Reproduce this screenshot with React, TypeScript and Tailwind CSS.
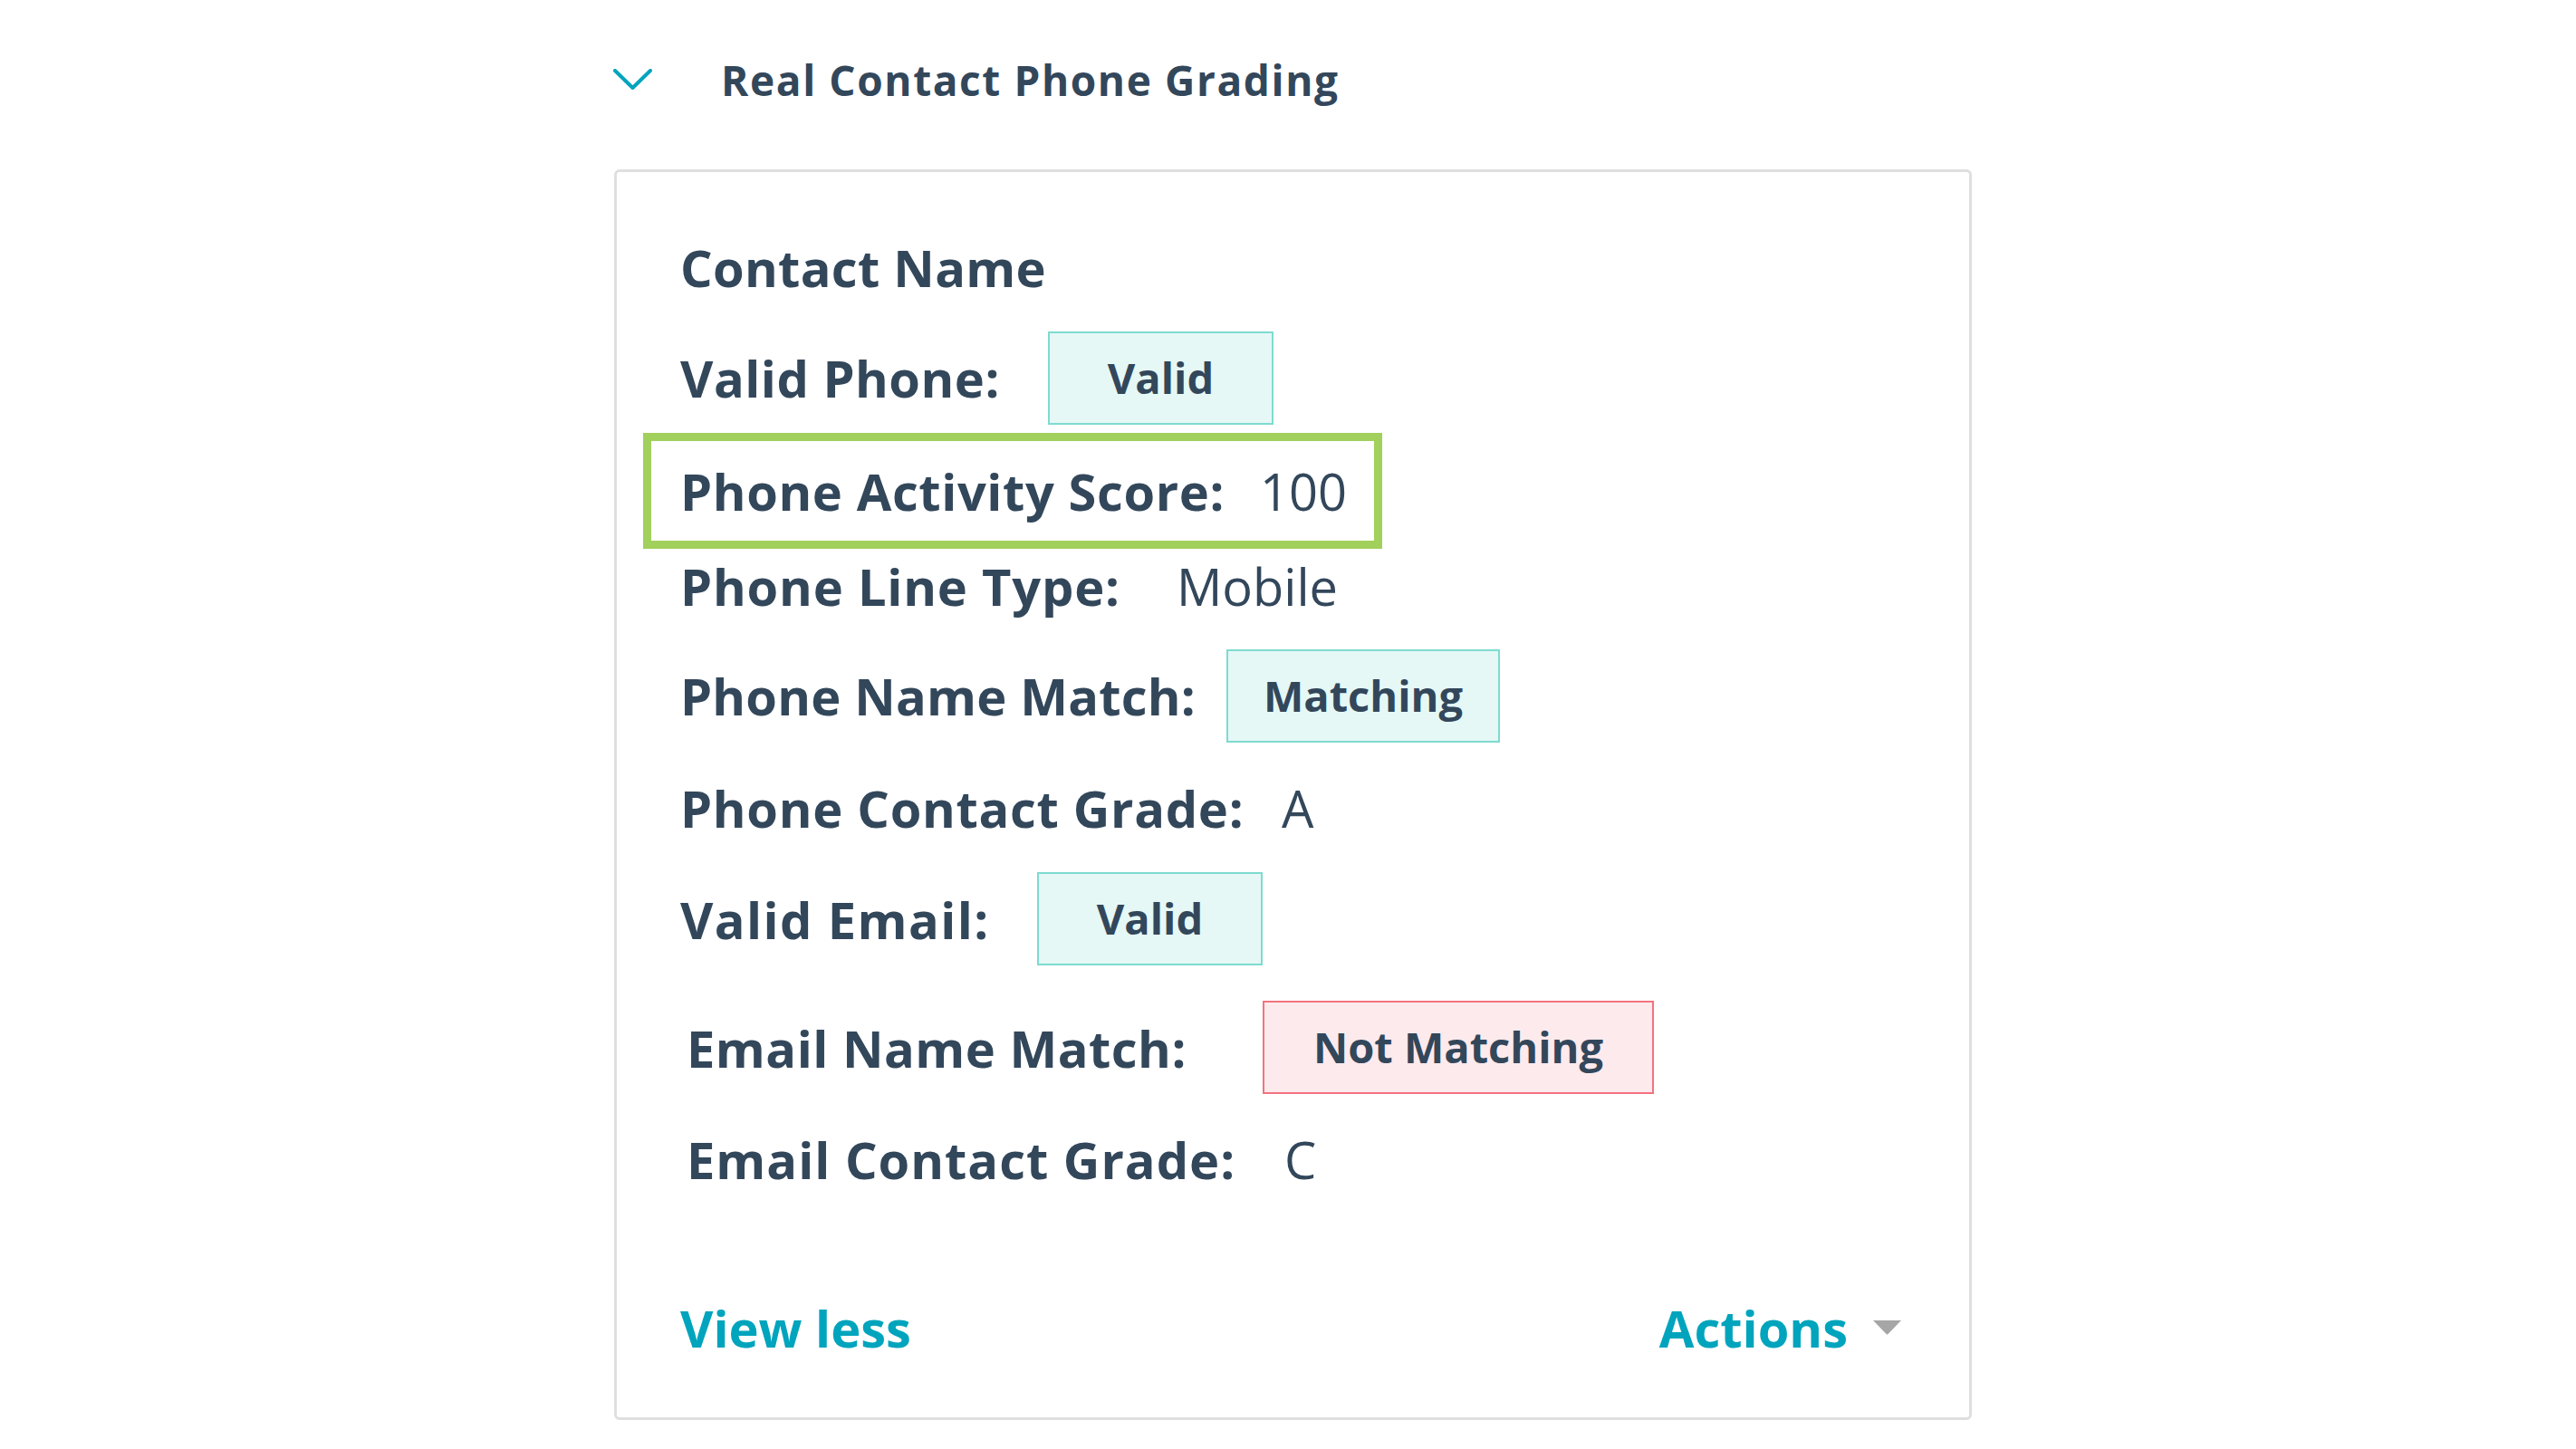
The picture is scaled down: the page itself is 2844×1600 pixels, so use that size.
import { ReactNode } from 'react';

// --- Small pieces ---
function Badge({ tone, className, children }: { tone: 'ok' | 'bad'; className: string; children: ReactNode }) {
  return (
    <span
      className={
        'flex h-[103px] shrink-0 items-center justify-center border-2 text-[47px] font-bold leading-none ' +
        (tone === 'ok' ? 'border-[#7edbcf] bg-[#e5f8f6] ' : 'border-[#f2737f] bg-[#fdeaed] ') +
        className
      }
    >
      {children}
    </span>
  );
}

function Chevron() {
  return (
    <svg width="43" height="24" viewBox="0 0 43 24" fill="none" className="shrink-0">
      <polyline points="2,2 21.5,21 41,2" stroke="#00a4bd" strokeWidth="4" strokeLinecap="round" strokeLinejoin="round" />
    </svg>
  );
}

export default function App() {
  return (
    <div className="min-h-screen bg-white font-['Open_Sans',sans-serif] text-[#33475b]">
      <div className="pl-[677px] pt-[64px]">
        {/* Header */}
        <div className="flex h-[48px] items-center">
          <Chevron />
          <h2 className="ml-[76px] whitespace-nowrap text-[46px] font-bold leading-none tracking-[1.6px]">Real Contact Phone Grading</h2>
        </div>

        {/* Card */}
        <div className="ml-px mt-[75px] w-[1499px] rounded-[6px] border-[3px] border-[#dfdfdf] pb-[49px] pl-[29px] pt-[44px]">
          <div className="flex h-[122px] items-center pl-[41px]">
            <span className="whitespace-nowrap text-[56px] font-bold leading-none tracking-[0.3px]">Contact Name</span>
          </div>

          <div className="flex h-[122px] items-center pl-[41px]">
            <span className="w-[406px] shrink-0 whitespace-nowrap text-[56px] font-bold leading-none tracking-[0.5px]">Valid Phone:</span>
            <Badge tone="ok" className="w-[249px]">Valid</Badge>
          </div>

          {/* highlighted row */}
          <div className="flex h-[128px] w-[816px] items-center border-[9px] border-[#a2d05c] pl-[32px]">
            <span className="w-[640px] shrink-0 whitespace-nowrap text-[56px] font-bold leading-none tracking-[0.6px]">Phone Activity Score:</span>
            <span className="whitespace-nowrap text-[56px] leading-none">100</span>
          </div>

          <div className="flex h-[81px] items-center pl-[41px]">
            <span className="w-[548px] shrink-0 whitespace-nowrap text-[56px] font-bold leading-none tracking-[0.8px]">Phone Line Type:</span>
            <span className="whitespace-nowrap text-[56px] leading-none">Mobile</span>
          </div>

          <div className="flex h-[162px] items-center pl-[41px]">
            <span className="w-[603px] shrink-0 whitespace-nowrap text-[56px] font-bold leading-none tracking-[0.2px]">Phone Name Match:</span>
            <Badge tone="ok" className="w-[302px]">Matching</Badge>
          </div>

          <div className="flex h-[86px] items-center pl-[41px]">
            <span className="w-[664px] shrink-0 whitespace-nowrap text-[56px] font-bold leading-none tracking-[0.7px]">Phone Contact Grade:</span>
            <span className="whitespace-nowrap text-[56px] leading-none">A</span>
          </div>

          <div className="flex h-[159px] items-center pl-[41px]">
            <span className="w-[394px] shrink-0 whitespace-nowrap text-[56px] font-bold leading-none tracking-[1.4px]">Valid Email:</span>
            <Badge tone="ok" className="w-[249px]">Valid</Badge>
          </div>

          <div className="flex h-[125px] items-center pl-[48px]">
            <span className="w-[636px] shrink-0 whitespace-nowrap text-[56px] font-bold leading-none tracking-[0.5px]">Email Name Match:</span>
            <Badge tone="bad" className="w-[432px]">Not Matching</Badge>
          </div>

          <div className="flex h-[122px] items-center pl-[48px]">
            <span className="w-[660px] shrink-0 whitespace-nowrap text-[56px] font-bold leading-none tracking-[1px]">Email Contact Grade:</span>
            <span className="whitespace-nowrap text-[56px] leading-none">C</span>
          </div>

          {/* Footer */}
          <div className="mt-[75px] flex h-[100px] items-center justify-between pl-[41px] pr-[75px]">
            <button className="whitespace-nowrap text-[56px] font-bold leading-none text-[#00a4bd]">View less</button>
            <button className="flex items-center gap-[28px] text-[56px] font-bold leading-none text-[#00a4bd]">
              Actions
              <svg width="31" height="16" viewBox="0 0 31 16">
                <path d="M0 0 H31 L16.5 15 Q15.5 16 14.5 15 Z" fill="#a6a6a6" />
              </svg>
            </button>
          </div>
        </div>
      </div>
    </div>
  );
}
